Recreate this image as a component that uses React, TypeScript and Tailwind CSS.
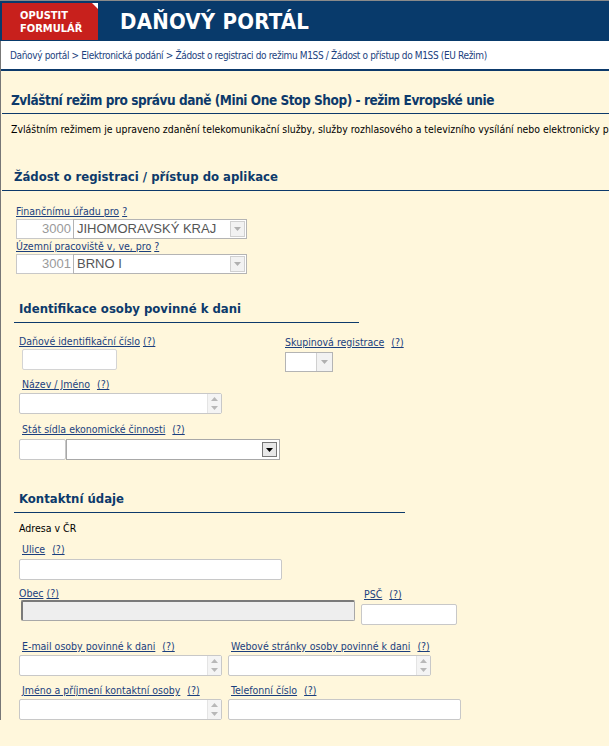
import React from 'react';

const font = { fontFamily: '"DejaVu Sans Condensed", "DejaVu Sans", sans-serif' };

const link = 'text-[#1b3f7e] underline';

const Label = ({ text, className = '' }: { text: string; className?: string }) => (
  <div className={`text-[10.5px] leading-[13px] ${className}`}>
    <a href="#" className={link}>{text}</a>
    <a href="#" className={`ml-[7px] ${link}`}>(?)</a>
  </div>
);

const ArrowDown = ({ color = '#b0b0b0' }: { color?: string }) => (
  <svg width="7" height="4" viewBox="0 0 7 4"><path d="M0 0h7L3.5 4z" fill={color} /></svg>
);

const Spin = () => (
  <div className="flex h-full w-[14px] flex-col items-center justify-center gap-[5px] border-l border-[#e4e4e4] bg-[#f4f4f4]">
    <svg width="7" height="4" viewBox="0 0 7 4"><path d="M0 4h7L3.5 0z" fill="#b8b8b8" /></svg>
    <ArrowDown color="#b8b8b8" />
  </div>
);

const TextArea = ({ w }: { w: string }) => (
  <div className={`flex h-[21px] ${w} justify-end rounded-[2px] border border-[#c8c8c8] bg-white`}>
    <Spin />
  </div>
);

const Input = ({ w, gray = false }: { w: string; gray?: boolean }) => (
  <div className={`h-[21px] ${w} rounded-[2px] border ${gray ? 'border-[#a8a8a8] border-t-2 border-l-2 border-t-[#7a7a7a] border-l-[#7a7a7a] bg-[#eeeeee]' : 'border-[#c8c8c8] bg-white'}`} />
);

const Office = ({ code, name }: { code: string; name: string }) => (
  <div className="flex h-[20px] w-[231px] text-[13px] leading-[18px]" style={{ fontFamily: '"Liberation Sans", Arial, sans-serif' }}>
    <div className="w-[57px] border border-r-0 border-[#c8c8c8] bg-white pr-[2px] text-right text-[#9a9a9a]">{code}</div>
    <div className="flex flex-1 items-center border border-[#b4b4b4] bg-white pl-[3px] text-[#555]">
      <span className="flex-1">{name}</span>
      <div className="mr-[1px] flex h-[16px] w-[15px] items-center justify-center border border-[#d0d0d0] bg-[#f2f2f2]">
        <ArrowDown />
      </div>
    </div>
  </div>
);

const Section = ({ title, w, className = '' }: { title: string; w: string; className?: string }) => (
  <div className={`${w} border-b border-[#0d3a6b] pb-[4px] pl-[5px] text-[13px] font-bold leading-[18px] text-[#0d3a6b] ${className}`}>{title}</div>
);

export default function App() {
  return (
    <div className="min-h-[746px] w-[609px] overflow-hidden bg-[#fff7dc] text-black" style={font}>
      <div className="flex h-[41px] border-t border-[#8a8a8a] bg-[#083a6b]">
        <div className="relative ml-[2px] mt-[2px] flex h-[37px] w-[96px] flex-col justify-center bg-[#c8201c] pl-[18px] text-[11px] font-bold leading-[13px] text-white">
          <span>OPUSTIT</span>
          <span>FORMULÁŘ</span>
          <div className="absolute right-0 top-0 h-0 w-0 border-l-[6px] border-t-[6px] border-l-transparent border-t-white" />
        </div>
        <div className="ml-[22px] flex items-center text-[22px] font-bold tracking-[0.2px] text-white">DAŇOVÝ PORTÁL</div>
      </div>
      <div className="border-l border-[#777]">
        <div className="h-[28px] bg-white pl-[9px] pt-[8px] text-[10px] leading-[14px] tracking-[-0.35px] text-[#1b3f7e]">
          Daňový portál &gt; Elektronická podání &gt; Žádost o registraci do režimu M1SS / Žádost o přístup do M1SS (EU Režim)
        </div>
        <div className="h-[2px] bg-[#0d3a6b]" />
        <div className="pl-[1px]">
          <div className="mt-[20px] whitespace-nowrap border-b border-[#0d3a6b] pb-[4px] pl-[9px] text-[13.5px] font-bold leading-[18px] tracking-[-0.45px] text-[#0d3a6b]">
            Zvláštní režim pro správu daně (Mini One Stop Shop) - režim Evropské unie
          </div>
          <div className="mt-[8px] overflow-hidden whitespace-nowrap pl-[9px] text-[10.4px] leading-[14px]">
            Zvláštním režimem je upraveno zdanění telekomunikační služby, služby rozhlasového a televizního vysílání nebo elektronicky p
          </div>
          <Section title="Žádost o registraci / přístup do aplikace" w="w-full" className="mt-[32px] pl-[12px]" />

          <div className="ml-[14px] mt-[14px]">
            <div className="text-[10.5px] leading-[13px]">
              <a href="#" className={link}>Finančnímu úřadu pro</a> <a href="#" className={link}>?</a>
            </div>
            <div className="mt-[1px]"><Office code="3000" name="JIHOMORAVSKÝ KRAJ" /></div>
            <div className="mt-[1px] text-[10.5px] leading-[13px]">
              <a href="#" className={link}>Územní pracoviště v, ve, pro</a> <a href="#" className={link}>?</a>
            </div>
            <div className="mt-[1px]"><Office code="3001" name="BRNO I" /></div>
          </div>

          <Section title="Identifikace osoby povinné k dani" w="w-[345px]" className="ml-[12px] mt-[26px]" />

          <div className="ml-[17px] mt-[12px] flex">
            <div className="w-[266px]">
              <div className="text-[10.5px] leading-[13px]">
                <a href="#" className={link}>Daňové identifikační číslo</a> <a href="#" className={link}>(?)</a>
              </div>
              <div className="ml-[3px] mt-[1px] h-[21px] w-[95px] rounded-[2px] border border-[#d4d4d4] bg-white" />
            </div>
            <div className="mt-[1px]">
              <Label text="Skupinová registrace" />
              <div className="mt-[3px] flex h-[20px] w-[48px] border border-[#b4b4b4] bg-white">
                <div className="flex-1" />
                <div className="flex w-[16px] items-center justify-center border-l border-[#d0d0d0] bg-[#f2f2f2]"><ArrowDown /></div>
              </div>
            </div>
          </div>

          <div className="ml-[17px] mt-[6px]">
            <Label text="Název / Jméno" className="ml-[3px]" />
            <div className="mt-[2px]"><TextArea w="w-[203px]" /></div>
            <Label text="Stát sídla ekonomické činnosti" className="ml-[3px] mt-[9px]" />
            <div className="mt-[3px] flex h-[21px]">
              <div className="w-[47px] rounded-[2px] border border-[#c8c8c8] bg-white" />
              <div className="flex w-[214px] items-center justify-end border border-[#a8a8a8] bg-white pr-[2px]">
                <div className="flex h-[15px] w-[15px] items-center justify-center border border-[#777] bg-[#e8e8e8]"><ArrowDown color="#000" /></div>
              </div>
            </div>
          </div>

          <Section title="Kontaktní údaje" w="w-[391px]" className="ml-[12px] mt-[30px]" />

          <div className="ml-[17px] mt-[8px]">
            <div className="text-[10.5px] leading-[14px]">Adresa v ČR</div>
            <Label text="Ulice" className="ml-[3px] mt-[8px]" />
            <div className="mt-[3px]"><Input w="w-[263px]" /></div>
            <div className="mt-[7px] flex">
              <div className="w-[342px]">
                <div className="text-[10.5px] leading-[13px]">
                  <a href="#" className={link}>Obec</a> <a href="#" className={link}>(?)</a>
                </div>
                <div className="ml-[2px] mt-[0px]"><Input w="w-[334px]" gray /></div>
              </div>
              <div className="mt-[1px]">
                <Label text="PSČ" className="ml-[3px]" />
                <div className="mt-[3px]"><Input w="w-[96px]" /></div>
              </div>
            </div>
            <div className="mt-[15px] flex gap-[6px]">
              <div>
                <Label text="E-mail osoby povinné k dani" className="ml-[3px]" />
                <div className="mt-[2px]"><TextArea w="w-[203px]" /></div>
              </div>
              <div>
                <Label text="Webové stránky osoby povinné k dani" className="ml-[3px]" />
                <div className="mt-[2px]"><TextArea w="w-[203px]" /></div>
              </div>
            </div>
            <div className="mt-[8px] flex gap-[6px]">
              <div>
                <Label text="Jméno a příjmení kontaktní osoby" className="ml-[3px]" />
                <div className="mt-[2px]"><TextArea w="w-[203px]" /></div>
              </div>
              <div>
                <Label text="Telefonní číslo" className="ml-[3px]" />
                <div className="mt-[2px]"><Input w="w-[233px]" /></div>
              </div>
            </div>
          </div>
        </div>
      </div>
    </div>
  );
}
